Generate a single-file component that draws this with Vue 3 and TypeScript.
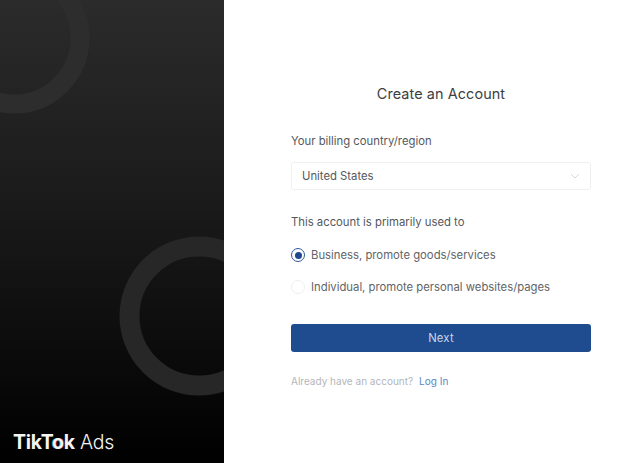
<script setup lang="ts">
import { ref } from 'vue'
const usage = ref<'business' | 'individual'>('business')
const options = [
  { id: 'business', label: 'Business, promote goods/services' },
  { id: 'individual', label: 'Individual, promote personal websites/pages' },
] as const
</script>

<template>
  <div class="page">
    <aside class="side">
      <svg class="rings" viewBox="0 0 224 463" width="224" height="463" aria-hidden="true">
        <circle cx="14" cy="38" r="66" fill="none" stroke="#2d2d2d" stroke-width="19" />
        <circle cx="199" cy="316" r="69.5" fill="none" stroke="#272727" stroke-width="20" />
      </svg>
      <div class="logo"><b>TikT<i>o</i>k</b> <span>Ads</span></div>
    </aside>
    <main class="main">
      <form class="form" @submit.prevent>
        <h1 class="title">Create an Account</h1>
        <div class="label first">Your billing country/region</div>
        <div class="select">
          <span>United States</span>
          <svg width="10" height="6" viewBox="0 0 10 6" aria-hidden="true">
            <path d="M1 1l4 4 4-4" fill="none" stroke="#d4d6da" stroke-width="1" />
          </svg>
        </div>
        <div class="label second">This account is primarily used to</div>
        <div class="options">
          <label v-for="o in options" :key="o.id" class="option" @click="usage = o.id">
            <span class="radio" :class="{ on: usage === o.id }"></span>
            <span>{{ o.label }}</span>
          </label>
        </div>
        <button class="next" type="button">Next</button>
        <div class="foot"><span>Already have an account?</span><a>Log In</a></div>
      </form>
    </main>
  </div>
</template>

<style>
html, body { margin: 0; background: #fff; }
</style>

<style scoped>
.page {
  display: flex;
  width: 620px;
  height: 463px;
  overflow: hidden;
  font-family: Inter, "Liberation Sans", sans-serif;
  color: #4a4c50;
}
.side {
  position: relative;
  width: 224px;
  flex: none;
  background: linear-gradient(180deg, #2b2b2b 0%, #1a1a1a 45%, #000 100%);
  overflow: hidden;
}
.rings { position: absolute; left: 0; top: 0; }
.logo {
  position: absolute;
  left: 13px;
  bottom: 9px;
  font-size: 19.5px;
  line-height: 24px;
  color: #f4f4f4;
  white-space: nowrap;
  letter-spacing: -0.25px;
}
.logo b { font-weight: 700; }
.logo i {
  font-style: normal;
  text-shadow: -1px 0 0 rgba(60, 230, 225, 0.55), 1px 0 0 rgba(240, 50, 100, 0.55);
}
.logo span { font-weight: 300; }
.main {
  flex: 1;
  padding-left: 67px;
}
.form {
  width: 300px;
  display: flex;
  flex-direction: column;
}
.title {
  margin: 85px 0 0;
  font-size: 14.4px;
  line-height: 18px;
  font-weight: 400;
  color: #3c3e42;
  text-align: center;
  letter-spacing: 0.1px;
}
.label {
  font-size: 11.3px;
  line-height: 14px;
  color: #55575b;
}
.first { margin-top: 31px; }
.select {
  margin-top: 14px;
  height: 28px;
  box-sizing: border-box;
  border: 1px solid #eeeff1;
  border-radius: 3px;
  padding: 0 10px;
  display: flex;
  align-items: center;
  justify-content: space-between;
  font-size: 11.3px;
  color: #55575b;
}
.second { margin-top: 25px; }
.options {
  margin-top: 19px;
  display: flex;
  flex-direction: column;
  gap: 18px;
}
.option {
  display: flex;
  align-items: center;
  gap: 6px;
  height: 14px;
  font-size: 11.3px;
  line-height: 14px;
  color: #626468;
}
.radio {
  width: 14px;
  height: 14px;
  box-sizing: border-box;
  border: 1px solid #eeeff1;
  border-radius: 50%;
  flex: none;
  display: flex;
  align-items: center;
  justify-content: center;
}
.radio.on { border-color: #2d5a9e; }
.radio.on::after {
  content: "";
  width: 7px;
  height: 7px;
  border-radius: 50%;
  background: #1f4b8e;
}
.next {
  margin-top: 30px;
  height: 28px;
  border: none;
  border-radius: 3px;
  background: #1f4c8f;
  color: #c9d6e8;
  font: inherit;
  font-size: 11.3px;
  letter-spacing: 0.2px;
}
.foot {
  margin-top: 23px;
  font-size: 10px;
  line-height: 12px;
  color: #b4b6ba;
  display: flex;
  gap: 6px;
}
.foot a { color: #5b86c2; }
</style>
